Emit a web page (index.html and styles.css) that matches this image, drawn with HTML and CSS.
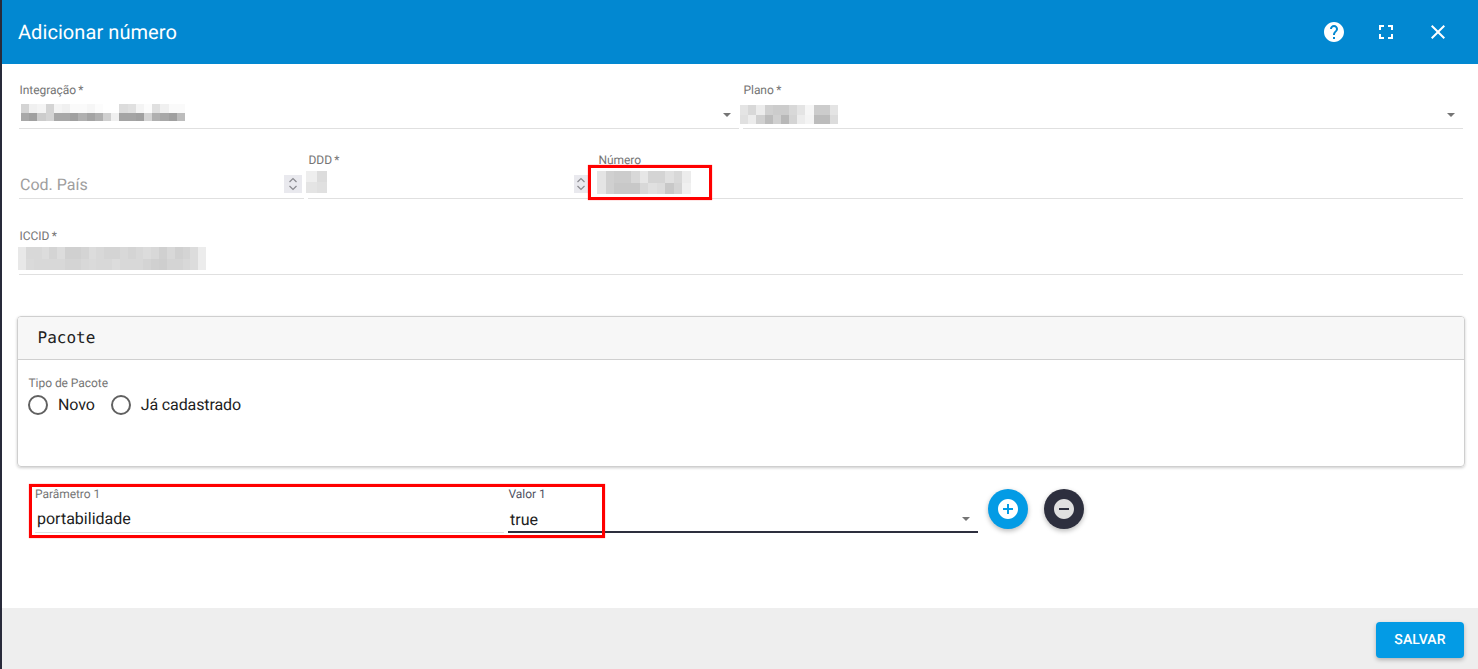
FILE: index.html
```html
<!DOCTYPE html>
<html lang="pt-BR">
<head>
<meta charset="utf-8">
<title>Adicionar número</title>
<link rel="stylesheet" href="styles.css">
</head>
<body>
<div class="strip"></div>
<div class="dialog">
  <header class="topbar">
    <h1 class="title">Adicionar número</h1>
    <div class="actions">
      <span class="action"><svg viewBox="0 0 24 24" class="icon"><path d="M12 2C6.48 2 2 6.48 2 12s4.48 10 10 10 10-4.48 10-10S17.52 2 12 2zm1 17h-2v-2h2v2zm2.07-7.75l-.9.92C13.45 12.9 13 13.5 13 15h-2v-.5c0-1.1.45-2.1 1.17-2.83l1.24-1.26c.37-.36.59-.86.59-1.41 0-1.1-.9-2-2-2s-2 .9-2 2H8c0-2.21 1.79-4 4-4s4 1.79 4 4c0 .88-.36 1.68-.93 2.25z"/></svg></span>
      <span class="action"><svg viewBox="0 0 24 24" class="icon"><path d="M7 14H5v5h5v-2H7v-3zm-2-4h2V7h3V5H5v5zm12 7h-3v2h5v-5h-2v3zM14 5v2h3v3h2V5h-5z"/></svg></span>
      <span class="action"><svg viewBox="0 0 24 24" class="icon"><path d="M19 6.41L17.59 5 12 10.59 6.41 5 5 6.41 10.59 12 5 17.59 6.41 19 12 13.41 17.59 19 19 17.59 13.41 12z"/></svg></span>
    </div>
  </header>

  <main class="content">
    <div class="row row-two">
      <div class="field">
        <label class="label">Integração&thinsp;*</label>
        <div class="value">
          <div class="mosaic m-integ">
            <i style="background:#d4d4d4"></i><i style="background:#f0f0f0"></i><i style="background:#f4f4f4"></i><i style="background:#d4d4d4"></i><i style="background:#f4f4f4"></i><i style="background:#f0f0f0"></i><i style="background:#fafafa"></i><i style="background:#fafafa"></i><i style="background:#f6f6f6"></i><i style="background:#fcfcfc"></i><i style="background:#fff"></i><i style="background:#fff"></i><i style="background:#dcdcdc"></i><i style="background:#e0e0e0"></i><i style="background:#f4f4f4"></i><i style="background:#fcfcfc"></i><i style="background:#e0e0e0"></i><i style="background:#f0f0f0"></i><i style="background:#fafafa"></i><i style="background:#fafafa"></i>
            <i style="background:#a8a8a8"></i><i style="background:#a0a0a0"></i><i style="background:#cccccc"></i><i style="background:#d4d4d4"></i><i style="background:#a8a8a8"></i><i style="background:#a8a8a8"></i><i style="background:#a0a0a0"></i><i style="background:#b0b0b0"></i><i style="background:#a4a4a4"></i><i style="background:#b0b0b0"></i><i style="background:#d0d0d0"></i><i style="background:#f0f0f0"></i><i style="background:#a4a4a4"></i><i style="background:#a4a4a4"></i><i style="background:#a0a0a0"></i><i style="background:#d4d4d4"></i><i style="background:#b0b0b0"></i><i style="background:#a8a8a8"></i><i style="background:#a0a0a0"></i><i style="background:#bcbcbc"></i>
          </div>
          <span class="caret"></span>
        </div>
      </div>
      <div class="field">
        <label class="label">Plano&thinsp;*</label>
        <div class="value">
          <div class="mosaic m-plano">
            <i style="background:#e4e4e4"></i><i style="background:#d8d8d8"></i><i style="background:#ececec"></i><i style="background:#d0d0d0"></i><i style="background:#cccccc"></i><i style="background:#cccccc"></i><i style="background:#d8d8d8"></i><i style="background:#e4e4e4"></i><i style="background:#f6f6f6"></i><i style="background:#cccccc"></i><i style="background:#cccccc"></i><i style="background:#e4e4e4"></i>
            <i style="background:#e0e0e0"></i><i style="background:#ececec"></i><i style="background:#d0d0d0"></i><i style="background:#bcbcbc"></i><i style="background:#d0d0d0"></i><i style="background:#b8b8b8"></i><i style="background:#d4d4d4"></i><i style="background:#ececec"></i><i style="background:#f4f4f4"></i><i style="background:#bcbcbc"></i><i style="background:#bcbcbc"></i><i style="background:#dcdcdc"></i>
          </div>
          <span class="caret"></span>
        </div>
      </div>
    </div>

    <div class="row row-three">
      <div class="field">
        <label class="label"></label>
        <div class="value">
          <span class="placeholder">Cod. País</span>
          <span class="stepper"><svg viewBox="0 0 14 18" class="stepper-icon"><path d="M3.5 7L7 3.5 10.5 7M3.5 11L7 14.5 10.5 11"/></svg></span>
        </div>
      </div>
      <div class="field">
        <label class="label">DDD&thinsp;*</label>
        <div class="value">
          <div class="mosaic m-ddd">
            <i style="background:#eeeeee"></i><i style="background:#dcdcdc"></i>
            <i style="background:#e4e4e4"></i><i style="background:#e0e0e0"></i>
          </div>
          <span class="stepper stepper-narrow"><svg viewBox="0 0 14 18" class="stepper-icon"><path d="M3.5 7L7 3.5 10.5 7M3.5 11L7 14.5 10.5 11"/></svg></span>
        </div>
      </div>
      <div class="field">
        <label class="label">Número</label>
        <div class="value">
          <div class="mosaic m-numero">
            <i style="background:#e4e4e4"></i><i style="background:#d0d0d0"></i><i style="background:#cccccc"></i><i style="background:#cccccc"></i><i style="background:#d8d8d8"></i><i style="background:#e6e6e6"></i><i style="background:#d4d4d4"></i><i style="background:#d4d4d4"></i><i style="background:#e0e0e0"></i><i style="background:#d8d8d8"></i><i style="background:#ececec"></i>
            <i style="background:#e4e4e4"></i><i style="background:#d0d0d0"></i><i style="background:#c8c8c8"></i><i style="background:#c8c8c8"></i><i style="background:#c8c8c8"></i><i style="background:#d8d8d8"></i><i style="background:#e0e0e0"></i><i style="background:#dcdcdc"></i><i style="background:#c8c8c8"></i><i style="background:#d4d4d4"></i><i style="background:#f0f0f0"></i>
          </div>
        </div>
      </div>
    </div>

    <div class="row row-one">
      <div class="field">
        <label class="label">ICCID&thinsp;*</label>
        <div class="value">
          <div class="mosaic m-iccid">
            <i style="background:#e8e8e8"></i><i style="background:#d8d8d8"></i><i style="background:#d8d8d8"></i><i style="background:#dcdcdc"></i><i style="background:#d4d4d4"></i><i style="background:#dcdcdc"></i><i style="background:#d0d0d0"></i><i style="background:#d0d0d0"></i><i style="background:#d4d4d4"></i><i style="background:#dcdcdc"></i><i style="background:#d8d8d8"></i><i style="background:#d4d4d4"></i><i style="background:#d4d4d4"></i><i style="background:#d8d8d8"></i><i style="background:#d4d4d4"></i><i style="background:#d8d8d8"></i><i style="background:#dcdcdc"></i><i style="background:#d8d8d8"></i><i style="background:#d0d0d0"></i><i style="background:#d8d8d8"></i><i style="background:#d0d0d0"></i><i style="background:#d4d4d4"></i><i style="background:#dcdcdc"></i><i style="background:#ececec"></i>
            <i style="background:#e8e8e8"></i><i style="background:#dadada"></i><i style="background:#d8d8d8"></i><i style="background:#d8d8d8"></i><i style="background:#d8d8d8"></i><i style="background:#d8d8d8"></i><i style="background:#d4d4d4"></i><i style="background:#d4d4d4"></i><i style="background:#d8d8d8"></i><i style="background:#dadada"></i><i style="background:#d8d8d8"></i><i style="background:#d8d8d8"></i><i style="background:#dcdcdc"></i><i style="background:#d8d8d8"></i><i style="background:#d8d8d8"></i><i style="background:#d8d8d8"></i><i style="background:#d4d4d4"></i><i style="background:#d0d0d0"></i><i style="background:#cecece"></i><i style="background:#d4d4d4"></i><i style="background:#d4d4d4"></i><i style="background:#d8d8d8"></i><i style="background:#dcdcdc"></i><i style="background:#ececec"></i>
          </div>
        </div>
      </div>
    </div>

    <section class="panel">
      <div class="panel-head">Pacote</div>
      <div class="panel-body">
        <div class="label">Tipo de Pacote</div>
        <div class="radios">
          <span class="radio"><span class="radio-dot"></span>Novo</span>
          <span class="radio"><span class="radio-dot"></span>Já cadastrado</span>
        </div>
      </div>
    </section>

    <div class="params">
      <div class="field field-param">
        <label class="label label-flush">Parâmetro 1</label>
        <div class="value"><span class="text">portabilidade</span></div>
      </div>
      <div class="field field-param field-active">
        <label class="label label-dark">Valor 1</label>
        <div class="value"><span class="text">true</span><span class="caret"></span></div>
      </div>
      <button class="fab fab-add" type="button"><svg viewBox="0 0 24 24" class="icon"><path d="M12 2C6.48 2 2 6.48 2 12s4.48 10 10 10 10-4.48 10-10S17.52 2 12 2zm5 11h-4v4h-2v-4H7v-2h4V7h2v4h4v2z"/></svg></button>
      <button class="fab fab-remove" type="button"><svg viewBox="0 0 24 24" class="icon"><path d="M12 2C6.48 2 2 6.48 2 12s4.48 10 10 10 10-4.48 10-10S17.52 2 12 2zm5 11H7v-2h10v2z"/></svg></button>
    </div>
  </main>

  <footer class="footer">
    <button class="save" type="button">SALVAR</button>
  </footer>
</div>
<div class="mark mark-numero"></div>
<div class="mark mark-params"></div>
</body>
</html>
```

FILE: styles.css
```css
* { box-sizing: border-box; }
html, body { height: 100%; }
body {
  margin: 0;
  display: flex;
  height: 669px;
  overflow: hidden;
  font-family: Roboto, "Liberation Sans", sans-serif;
  color: #212121;
  background: #fff;
  text-rendering: geometricPrecision;
}
.strip { width: 2px; flex: none; background: #282a3a; }
.dialog { flex: 1; display: flex; flex-direction: column; min-width: 0; }

.topbar {
  height: 64px;
  flex: none;
  background: #0288d1;
  color: #fff;
  display: flex;
  align-items: center;
  justify-content: space-between;
  padding: 0 14px 0 16px;
}
.title { margin: 0; font-size: 20px; font-weight: 400; letter-spacing: .07px; }
.actions { display: flex; }
.action { width: 52px; display: flex; justify-content: center; }
.icon { width: 24px; height: 24px; fill: currentColor; display: block; }

.content { flex: 1; padding: 18px 13px 0 15px; min-height: 0; }
.row { display: grid; gap: 4px; margin: 0 2px; }
.row-two { grid-template-columns: 1fr 1fr; }
.row-three { grid-template-columns: 285px 286px 1fr; margin-top: 23px; }
.row-one { grid-template-columns: 1fr; margin-top: 29px; }

.field { height: 47px; display: flex; flex-direction: column; }
.label {
  display: block;
  font-size: 12px;
  line-height: 16px;
  height: 14px;
  color: #757575;
  padding-left: .5px;
  letter-spacing: -.05px;
}
.label-flush { padding-left: 0; }
.label-dark { color: #50525f; }
.value {
  flex: 1;
  display: flex;
  align-items: center;
  justify-content: space-between;
  border-bottom: 1px solid #e0e0e0;
  min-width: 0;
}
.placeholder { font-size: 16px; color: #9e9e9e; padding-left: 1px; margin-top: 5px; }
.text { font-size: 16px; color: #212121; padding-left: 2px; }

.mosaic { display: grid; grid-auto-rows: 1fr; align-self: flex-start; }
.mosaic i { display: block; }
.m-integ { width: 164px; height: 17px; grid-template-columns: repeat(20, 1fr); margin: 8px 0 0 2px; }
.m-plano { width: 98px; height: 19px; grid-template-columns: repeat(12, 1fr); margin: 9px 0 0 -3px; }
.m-ddd { width: 21px; height: 22px; grid-template-columns: 1fr 1fr; margin: 5px 0 0 -2px; }
.m-numero { width: 94px; height: 23px; grid-template-columns: repeat(11, 1fr); margin: 5px 0 0 -1px; }
.m-iccid { width: 188px; height: 23px; grid-template-columns: repeat(24, 1fr); margin: 5px 0 0 -1px; }

.caret {
  width: 0;
  height: 0;
  border-left: 4px solid transparent;
  border-right: 4px solid transparent;
  border-top: 4px solid #757575;
  margin: 6px 8px 0 0;
}
.stepper {
  width: 18px;
  height: 18px;
  background: #e9e9ee;
  margin: 9px 2px 0 0;
  flex: none;
  display: block;
  align-self: flex-start;
}
.stepper-narrow { width: 14px; margin-right: 6px; }
.stepper-icon { width: 100%; height: 100%; display: block; fill: none; stroke: #8a8a8f; stroke-width: 1.2; }

.panel {
  margin-top: 41px;
  height: 151px;
  border: 1px solid #cfcfcf;
  border-radius: 4px;
  box-shadow: 0 1px 3px rgba(0, 0, 0, .2);
  overflow: hidden;
}
.panel-head {
  height: 43px;
  background: #f7f7f7;
  border-bottom: 1px solid #d0d0d0;
  font-family: "DejaVu Sans Mono", monospace;
  font-size: 16px;
  line-height: 42px;
  padding-left: 19.5px;
}
.panel-body { padding: 15px 10px 0 10px; }
.radios { display: flex; gap: 16px; margin-top: 4px; }
.radio { display: flex; align-items: center; gap: 10px; font-size: 16px; line-height: 24px; letter-spacing: -.12px; }
.radio-dot {
  width: 20px;
  height: 20px;
  border: 2px solid #616161;
  border-radius: 50%;
  flex: none;
}

.params { display: flex; align-items: flex-start; margin: 19px 0 0 18px; }
.field-param { width: 469px; margin-right: 4px; }
.field-active { width: 470px; margin-right: 10px; }
.field-param .value { padding-top: 4px; }
.field-active .value { border-bottom: 2px solid #2d2f3e; padding-top: 8px; }
.field-param .caret { margin-top: -2px; }
.fab {
  width: 40px;
  height: 40px;
  border: 0;
  border-radius: 50%;
  padding: 8px;
  margin-top: 3px;
  box-shadow: 0 2px 5px rgba(0, 0, 0, .28);
}
.fab-add { background: #039be5; color: #fff; margin-right: 16px; }
.fab-remove { background: #2d2f3e; color: #e0e0e0; }

.footer {
  height: 61px;
  flex: none;
  background: #eeeeee;
  display: flex;
  justify-content: flex-end;
  padding: 14px 14px 0 0;
}
.save {
  width: 88px;
  height: 36px;
  border: 0;
  border-radius: 4px;
  background: #039be5;
  color: #fff;
  font-family: Roboto, sans-serif;
  font-size: 14px;
  font-weight: 500;
  letter-spacing: .1px;
  box-shadow: 0 2px 4px rgba(0, 0, 0, .25);
  text-rendering: geometricPrecision;
}

.mark { position: absolute; border: 3px solid #ff0000; box-shadow: 0 0 1px rgba(255, 0, 0, .6); }
.mark-numero { left: 588px; top: 165px; width: 124px; height: 35px; }
.mark-params { left: 29px; top: 484px; width: 576px; height: 54px; }
```
